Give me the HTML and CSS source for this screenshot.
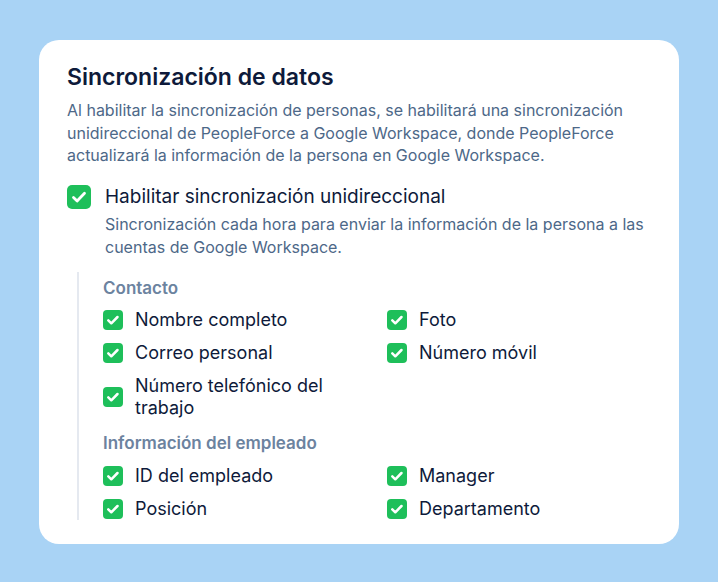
FILE: index.html
```html
<!DOCTYPE html>
<html lang="es">
<head>
<meta charset="utf-8">
<link rel="stylesheet" href="styles.css">
</head>
<body>
<div class="card">
  <h2 class="title">Sincronización de datos</h2>
  <p class="desc">Al habilitar la sincronización de personas, se habilitará una sincronización unidireccional de PeopleForce a Google Workspace, donde PeopleForce actualizará la información de la persona en Google Workspace.</p>
  <div class="main-check">
    <span class="box box-lg"><svg viewBox="0 0 24 24"><path d="M6.5 12.5l3.6 3.4 7.4-7.6" fill="none" stroke="#fff" stroke-width="2.8" stroke-linecap="round" stroke-linejoin="round"/></svg></span>
    <span class="main-label">Habilitar sincronización unidireccional</span>
  </div>
  <p class="sub-desc">Sincronización cada hora para enviar la información de la persona a las cuentas de Google Workspace.</p>
  <div class="fields">
    <div class="group-title">Contacto</div>
    <div class="grid">
      <label class="item"><span class="box"><svg viewBox="0 0 20 20"><path d="M5.3 10.4l3 2.9 6.2-6.3" fill="none" stroke="#fff" stroke-width="2.5" stroke-linecap="round" stroke-linejoin="round"/></svg></span><span>Nombre completo</span></label>
      <label class="item"><span class="box"><svg viewBox="0 0 20 20"><path d="M5.3 10.4l3 2.9 6.2-6.3" fill="none" stroke="#fff" stroke-width="2.5" stroke-linecap="round" stroke-linejoin="round"/></svg></span><span>Foto</span></label>
      <label class="item"><span class="box"><svg viewBox="0 0 20 20"><path d="M5.3 10.4l3 2.9 6.2-6.3" fill="none" stroke="#fff" stroke-width="2.5" stroke-linecap="round" stroke-linejoin="round"/></svg></span><span>Correo personal</span></label>
      <label class="item"><span class="box"><svg viewBox="0 0 20 20"><path d="M5.3 10.4l3 2.9 6.2-6.3" fill="none" stroke="#fff" stroke-width="2.5" stroke-linecap="round" stroke-linejoin="round"/></svg></span><span>Número móvil</span></label>
      <label class="item"><span class="box"><svg viewBox="0 0 20 20"><path d="M5.3 10.4l3 2.9 6.2-6.3" fill="none" stroke="#fff" stroke-width="2.5" stroke-linecap="round" stroke-linejoin="round"/></svg></span><span class="narrow">Número telefónico del trabajo</span></label>
    </div>
    <div class="group-title second">Información del empleado</div>
    <div class="grid grid-second">
      <label class="item"><span class="box"><svg viewBox="0 0 20 20"><path d="M5.3 10.4l3 2.9 6.2-6.3" fill="none" stroke="#fff" stroke-width="2.5" stroke-linecap="round" stroke-linejoin="round"/></svg></span><span>ID del empleado</span></label>
      <label class="item"><span class="box"><svg viewBox="0 0 20 20"><path d="M5.3 10.4l3 2.9 6.2-6.3" fill="none" stroke="#fff" stroke-width="2.5" stroke-linecap="round" stroke-linejoin="round"/></svg></span><span>Manager</span></label>
      <label class="item"><span class="box"><svg viewBox="0 0 20 20"><path d="M5.3 10.4l3 2.9 6.2-6.3" fill="none" stroke="#fff" stroke-width="2.5" stroke-linecap="round" stroke-linejoin="round"/></svg></span><span>Posición</span></label>
      <label class="item"><span class="box"><svg viewBox="0 0 20 20"><path d="M5.3 10.4l3 2.9 6.2-6.3" fill="none" stroke="#fff" stroke-width="2.5" stroke-linecap="round" stroke-linejoin="round"/></svg></span><span>Departamento</span></label>
    </div>
  </div>
</div>
</body>
</html>
```
FILE: styles.css
```css
html, body {
  margin: 0;
  padding: 0;
}
body {
  width: 718px;
  height: 582px;
  background: #a9d3f5;
  font-family: Inter, "Noto Sans", sans-serif;
  padding: 40px 39px;
  box-sizing: border-box;
}
.card {
  background: #fff;
  border-radius: 20px;
  padding: 23px 28px 24px 28px;
  box-sizing: border-box;
  width: 640px;
}
.title {
  margin: 0;
  font-size: 23px;
  line-height: 28px;
  font-weight: 600;
  color: #0e1a3a;
}
.desc {
  margin: 8px 0 0;
  font-size: 16px;
  line-height: 22.5px;
  color: #4d6888;
}
.main-check {
  display: flex;
  align-items: center;
  gap: 14px;
  margin-top: 18px;
}
.box {
  flex: none;
  width: 20px;
  height: 20px;
  border-radius: 4px;
  background: #1ebf5a;
  display: flex;
}
.box svg {
  width: 100%;
  height: 100%;
}
.box-lg {
  width: 24px;
  height: 24px;
  border-radius: 5px;
}
.main-label {
  font-size: 19px;
  line-height: 24px;
  color: #0e1a3a;
}
.sub-desc {
  margin: 4px 0 0 38px;
  font-size: 16px;
  line-height: 23px;
  color: #4d6888;
}
.fields {
  margin: 13px 0 0 10px;
  border-left: 2px solid #e5e9f0;
  padding-left: 24px;
}
.group-title {
  font-size: 17px;
  line-height: 22px;
  font-weight: 600;
  color: #6c839f;
  padding-top: 5px;
}
.group-title.second {
  padding-top: 13px;
}
.grid {
  display: grid;
  grid-template-columns: 264px 1fr;
  column-gap: 20px;
  row-gap: 11px;
  margin-top: 10px;
}
.grid-second {
  margin-top: 11px;
}
.item {
  display: flex;
  align-items: center;
  gap: 12px;
  font-size: 18px;
  line-height: 22px;
  color: #0e1a3a;
}
.narrow {
  max-width: 200px;
}
```
